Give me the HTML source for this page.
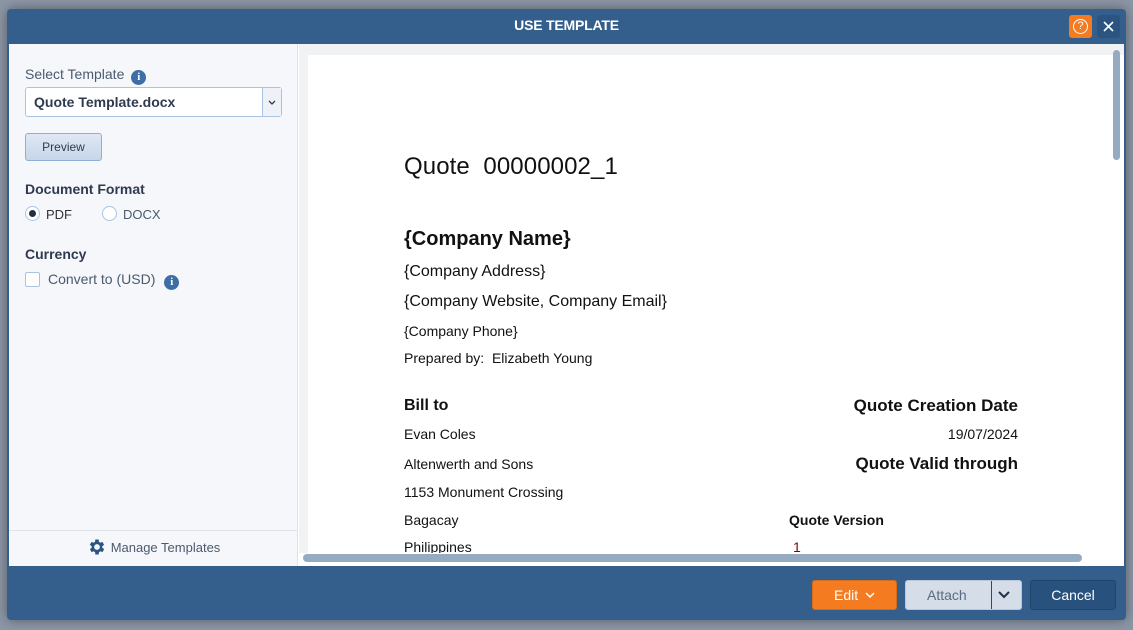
<!DOCTYPE html>
<html><head><style>
*{box-sizing:border-box;margin:0;padding:0}
body{width:1133px;height:630px;background:#8c97a6;font-family:"Liberation Sans",sans-serif;position:relative;overflow:hidden}
.modal{position:absolute;left:7px;top:9px;width:1119px;height:611px;background:#345f8c;border-radius:4px;box-shadow:0 0 12px rgba(0,0,0,.4)}
.hdr{position:absolute;left:0;top:0;width:100%;height:35px;color:#fff;text-align:center;font-size:14px;line-height:33px;font-weight:bold;letter-spacing:-0.2px}
.body{position:absolute;left:2px;top:35px;width:1115px;height:522px;background:#fff}
.left{position:absolute;left:0;top:0;width:289px;height:522px;background:#f5f7fb;border-right:1px solid #dde3ec}
.lbl{position:absolute;color:#333;font-size:14px}
.b{font-weight:bold;color:#2e3b4e}
.info{display:inline-block;width:15px;height:15px;border-radius:50%;background:#3d6fa6;color:#fff;font-size:11px;font-weight:bold;text-align:center;line-height:15px;font-family:"Liberation Serif",serif;vertical-align:-1px;margin-left:3px}
.sel{position:absolute;left:16px;top:43px;width:257px;height:30px;border:1px solid #a9c4e2;border-radius:3px;background:#fff;font-weight:bold;color:#2e3b4e;font-size:14px;line-height:28px;padding-left:8px}
.sel .ar{position:absolute;right:0;top:0;width:19px;height:28px;border-left:1px solid #a9c4e2;background:#eef2f8}
.prev{position:absolute;left:16px;top:89px;width:77px;height:28px;border:1px solid #8cb0d8;border-radius:3px;background:linear-gradient(#dfe8f4,#c7d6ea);font-size:12px;color:#2e3b4e;text-align:center;line-height:26px}
.radio{position:absolute;width:15px;height:15px;border:1px solid #a9c4e2;border-radius:50%;background:#fff}
.mng{position:absolute;left:0;top:486px;width:289px;height:36px;border-top:1px solid #e0e3e8;font-size:13px;color:#4b5a6e;text-align:center;line-height:34px}
.prearea{position:absolute;left:290px;top:0;width:825px;height:522px;background:#f1f2f4}
.page{position:absolute;left:9px;top:11px;width:816px;height:511px;background:#fff;overflow:hidden;color:#111}
.t{position:absolute;white-space:nowrap}
.btn{position:absolute;top:571px;height:30px;border-radius:3px;font-size:14px;line-height:28px;text-align:center}
</style></head><body>
<div class="modal">
 <div class="hdr">USE TEMPLATE</div>
 <div style="position:absolute;left:1062px;top:6px;width:23px;height:23px;background:#f47b20;border-radius:3px"><div style="position:absolute;left:4px;top:4px;width:15px;height:15px;border:1px solid #fff;border-radius:50%;color:#fff;font-size:11px;text-align:center;line-height:13px">?</div></div>
 <div style="position:absolute;left:1090px;top:6px;width:23px;height:23px;background:#2b5580;border-radius:3px"><svg width="23" height="23"><path d="M7 7l9 9M16 7l-9 9" stroke="#fff" stroke-width="1.6"/></svg></div>
 <div class="body">
  <div class="left">
   <div class="lbl" style="left:16px;top:22px;color:#4b5a6e">Select Template <span class="info">i</span></div>
   <div class="sel">Quote Template.docx<div class="ar"><svg width="19" height="28"><path d="M6 13l3 3 3-3" stroke="#2e3b4e" fill="none" stroke-width="1.3"/></svg></div></div>
   <div class="prev">Preview</div>
   <div class="lbl b" style="left:16px;top:137px">Document Format</div>
   <div class="radio" style="left:16px;top:162px"><div style="position:absolute;left:3px;top:3px;width:7px;height:7px;border-radius:50%;background:#1f2f44"></div></div>
   <div class="lbl" style="left:37px;top:163px;font-size:13px">PDF</div>
   <div class="radio" style="left:93px;top:162px"></div>
   <div class="lbl" style="left:114px;top:163px;font-size:13px;color:#4b5a6e">DOCX</div>
   <div class="lbl b" style="left:16px;top:202px">Currency</div>
   <div style="position:absolute;left:16px;top:228px;width:15px;height:15px;border:1px solid #a9c4e2;background:#fff;border-radius:2px"></div>
   <div class="lbl" style="left:39px;top:227px;color:#4b5a6e">Convert to (USD) <span class="info" style="margin-left:5px">i</span></div>
   <div class="mng"><svg width="20" height="20" viewBox="0 0 24 24" style="vertical-align:-5px;margin-right:4px"><path fill="#2b5580" d="M19.4 13a7.5 7.5 0 000-2l2.1-1.6-2-3.5-2.5 1a7.7 7.7 0 00-1.7-1L15 3h-4l-.4 2.9a7.7 7.7 0 00-1.7 1l-2.5-1-2 3.5L6.6 11a7.5 7.5 0 000 2l-2.1 1.6 2 3.5 2.5-1a7.7 7.7 0 001.7 1L11 21h4l.4-2.9a7.7 7.7 0 001.7-1l2.5 1 2-3.5zM13 15.5a3.5 3.5 0 110-7 3.5 3.5 0 010 7z" transform="translate(-1 0)"/></svg>Manage Templates</div>
  </div>
  <div class="prearea">
   <div class="page">
    <div class="t" style="left:96px;top:98px;font-size:24px;letter-spacing:0.1px">Quote&nbsp; 00000002_1</div>
    <div class="t" style="left:96px;top:173px;font-size:20px;font-weight:bold">{Company Name}</div>
    <div class="t" style="left:96px;top:208px;font-size:16px">{Company Address}</div>
    <div class="t" style="left:96px;top:238px;font-size:16px">{Company Website, Company Email}</div>
    <div class="t" style="left:96px;top:268px;font-size:14px">{Company Phone}</div>
    <div class="t" style="left:96px;top:295px;font-size:14px">Prepared by:&nbsp; Elizabeth Young</div>
    <div class="t" style="left:96px;top:342px;font-size:16px;font-weight:bold">Bill to</div>
    <div class="t" style="right:106px;top:341px;font-size:17px;font-weight:bold">Quote Creation Date</div>
    <div class="t" style="left:96px;top:371px;font-size:14px">Evan Coles</div>
    <div class="t" style="right:106px;top:371px;font-size:14px">19/07/2024</div>
    <div class="t" style="left:96px;top:401px;font-size:14px">Altenwerth and Sons</div>
    <div class="t" style="right:106px;top:399px;font-size:17px;font-weight:bold">Quote Valid through</div>
    <div class="t" style="left:96px;top:429px;font-size:14px">1153 Monument Crossing</div>
    <div class="t" style="left:96px;top:457px;font-size:14px">Bagacay</div>
    <div class="t" style="left:481px;top:457px;font-size:14px;font-weight:bold">Quote Version</div>
    <div class="t" style="left:96px;top:484px;font-size:14px">Philippines</div>
    <div class="t" style="left:485px;top:484px;font-size:14px;color:#800">1</div>
   </div>
   <div style="position:absolute;left:814px;top:6px;width:7px;height:110px;background:#94abc2;border-radius:4px"></div>
   <div style="position:absolute;left:0;top:509px;width:825px;height:13px;background:#fff"></div>
   <div style="position:absolute;left:4px;top:510px;width:779px;height:8px;background:#94abc2;border-radius:4px"></div>
  </div>
 </div>
 <div class="btn" style="left:805px;width:85px;background:#f47b20;color:#fff;border:1px solid #d56a18">Edit <svg width="10" height="8" style="vertical-align:1px;margin-left:3px"><path d="M1 2l4 4 4-4" stroke="#fff" fill="none" stroke-width="1.5"/></svg></div>
 <div class="btn" style="left:898px;width:117px;background:#d4dde8;color:#5b6b80;border:1px solid #b9c7d8;text-align:left;padding-left:21px">Attach<div style="position:absolute;left:85px;top:0;width:1px;height:28px;background:#2b4a6e"></div><svg style="position:absolute;left:91px;top:9px" width="14" height="10"><path d="M2 2l5 5 5-5" stroke="#1f2f44" fill="none" stroke-width="2"/></svg></div>
 <div class="btn" style="left:1023px;width:86px;background:#28527d;color:#fff;border:1px solid #1f4469">Cancel</div>
</div>
</body></html>
